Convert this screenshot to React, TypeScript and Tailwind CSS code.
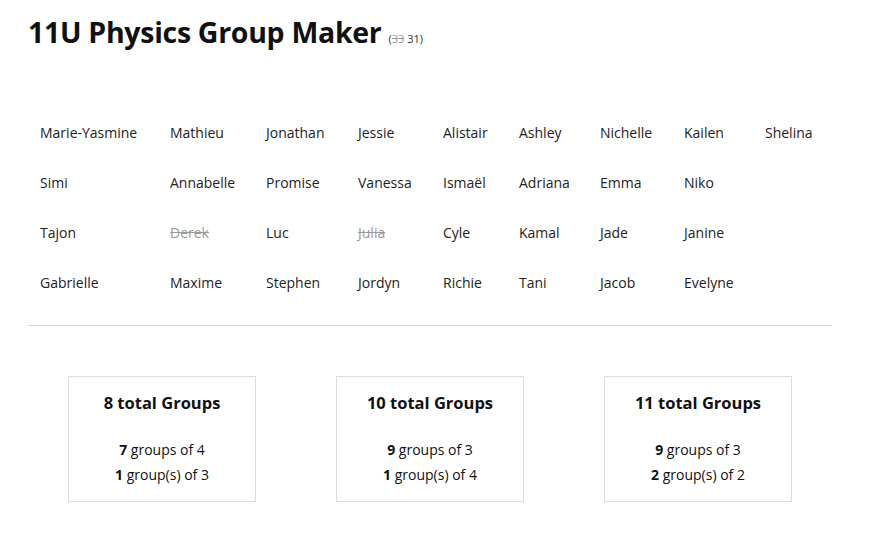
const rows: { name: string; out?: boolean }[][] = [
  [
    { name: "Marie-Yasmine" },
    { name: "Mathieu" },
    { name: "Jonathan" },
    { name: "Jessie" },
    { name: "Alistair" },
    { name: "Ashley" },
    { name: "Nichelle" },
    { name: "Kailen" },
    { name: "Shelina" },
  ],
  [
    { name: "Simi" },
    { name: "Annabelle" },
    { name: "Promise" },
    { name: "Vanessa" },
    { name: "Ismaël" },
    { name: "Adriana" },
    { name: "Emma" },
    { name: "Niko" },
  ],
  [
    { name: "Tajon" },
    { name: "Derek", out: true },
    { name: "Luc" },
    { name: "Julia", out: true },
    { name: "Cyle" },
    { name: "Kamal" },
    { name: "Jade" },
    { name: "Janine" },
  ],
  [
    { name: "Gabrielle" },
    { name: "Maxime" },
    { name: "Stephen" },
    { name: "Jordyn" },
    { name: "Richie" },
    { name: "Tani" },
    { name: "Jacob" },
    { name: "Evelyne" },
  ],
];

const options = [
  { total: 8, a: [7, "groups of 4"], b: [1, "group(s) of 3"] },
  { total: 10, a: [9, "groups of 3"], b: [1, "group(s) of 4"] },
  { total: 11, a: [9, "groups of 3"], b: [2, "group(s) of 2"] },
];

export default function App() {
  return (
    <div className="min-h-screen bg-white text-[#111] font-['Open_Sans',sans-serif] px-[28px] pt-[11px]">
      <h1 className="flex items-baseline gap-[7px]">
        <span className="text-[28.5px] font-bold tracking-[-0.3px]">11U Physics Group Maker</span>
        <span className="text-[11px] text-[#333]">
          (<span className="line-through text-[#999]">33</span> 31)
        </span>
      </h1>

      <div className="w-[804px] mt-[54px] px-[12px]">
        {rows.map((row, i) => (
          <div
            key={i}
            className="grid grid-cols-[130px_96px_92px_85px_76px_81px_84px_81px_1fr] h-[50px] items-center text-[14px] text-[#222]"
          >
            {row.map((p) => (
              <div key={p.name} className={p.out ? "line-through text-[#999]" : ""}>
                {p.name}
              </div>
            ))}
          </div>
        ))}
      </div>

      <div className="w-[804px] h-px bg-[#d8d8d8] mt-[17px]" />

      <div className="flex gap-[80px] pl-[40px] mt-[50px]">
        {options.map((o) => (
          <div
            key={o.total}
            className="w-[188px] h-[126px] border border-[#dcdcdc] flex flex-col items-center pt-[14px]"
          >
            <div className="text-[16.5px] font-bold">{o.total} total Groups</div>
            <div className="mt-[21px] text-[14px] leading-[25px] text-center">
              <div>
                <b>{o.a[0]}</b> {o.a[1]}
              </div>
              <div>
                <b>{o.b[0]}</b> {o.b[1]}
              </div>
            </div>
          </div>
        ))}
      </div>
    </div>
  );
}
